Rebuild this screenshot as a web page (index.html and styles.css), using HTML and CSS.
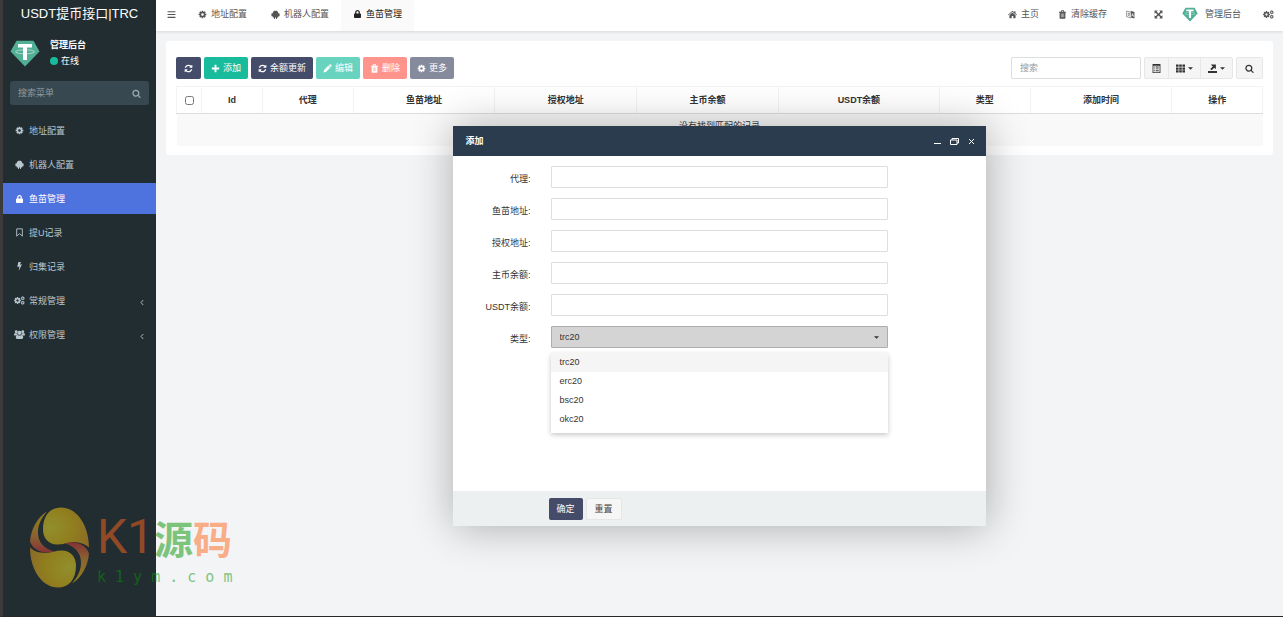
FILE: index.html
```html
<!DOCTYPE html>
<html lang="zh-CN">
<head>
<meta charset="utf-8">
<meta name="viewport" content="width=device-width, initial-scale=1">
<title>鱼苗管理</title>
<link rel="stylesheet" href="styles.css">
</head>
<body>
<svg class="sprite" aria-hidden="true">
  <symbol id="i-cog" viewBox="0 0 1792 1792"><path d="M1152 896q0-106-75-181t-181-75-181 75-75 181 75 181 181 75 181-75 75-181zm512-109v222q0 12-8 23t-20 13l-185 28q-19 54-39 91 35 50 107 138 10 12 10 25t-9 23q-27 37-99 108t-94 71q-12 0-26-9l-138-108q-44 23-91 38-16 136-29 186-7 28-36 28h-222q-14 0-24.5-8.5t-11.5-21.5l-28-184q-49-16-90-37l-141 107q-10 9-25 9-14 0-25-11-126-114-165-168-7-10-7-23 0-12 8-23 15-21 51-66.5t54-70.5q-27-50-41-99l-183-27q-13-2-21-12.5t-8-23.5v-222q0-12 8-23t19-13l186-28q14-46 39-92-40-57-107-138-10-12-10-24 0-10 9-23 26-36 98.5-107.5t94.5-71.5q13 0 26 10l138 107q44-23 91-38 16-136 29-186 7-28 36-28h222q14 0 24.5 8.5t11.5 21.5l28 184q49 16 90 37l142-107q9-9 24-9 13 0 25 10 129 119 165 170 7 8 7 22 0 12-8 23-15 21-51 66.5t-54 70.5q26 50 41 98l183 28q13 2 21 12.5t8 23.5z"/></symbol>
  <symbol id="i-cogs" viewBox="0 0 22 18"><use href="#i-cog" x="-1" y="1" width="16" height="16"/><use href="#i-cog" x="13" y="0" width="9" height="9"/><use href="#i-cog" x="13" y="9" width="9" height="9"/></symbol>
  <symbol id="i-refresh" viewBox="0 0 1792 1792"><path d="M1639 1056q0 5-1 7-64 268-268 434.500t-478 166.500q-146 0-282.500-55t-243.500-157l-129 129q-19 19-45 19t-45-19-19-45v-448q0-26 19-45t45-19h448q26 0 45 19t19 45-19 45l-137 137q71 66 161 102t187 36q134 0 250-65t186-179q11-17 53-117 8-23 30-23h192q13 0 22.500 9.500t9.500 22.500zm25-800v448q0 26-19 45t-45 19h-448q-26 0-45-19t-19-45 19-45l138-138q-148-137-349-137-134 0-250 65t-186 179q-11 17-53 117-8 23-30 23h-199q-13 0-22.500-9.500t-9.500-22.500v-7q65-268 270-434.500t480-166.500q146 0 284 55.500t245 156.500l130-129q19-19 45-19t45 19 19 45z"/></symbol>
  <symbol id="i-search" viewBox="0 0 1792 1792"><path d="M1216 832q0-185-131.500-316.500t-316.500-131.500-316.500 131.500-131.500 316.500 131.500 316.500 316.500 131.500 316.500-131.500 131.500-316.500zm512 832q0 52-38 90t-90 38q-54 0-90-38l-343-342q-179 124-399 124-143 0-273.500-55.500t-225-150-150-225-55.500-273.500 55.500-273.500 150-225 225-150 273.500-55.500 273.500 55.500 225 150 150 225 55.500 273.500q0 220-124 399l343 343q37 37 37 90z"/></symbol>
  <symbol id="i-lock" viewBox="-32 0 512 512"><path d="M400 224h-24v-72C376 68.200 307.800 0 224 0S72 68.200 72 152v72H48c-26.500 0-48 21.500-48 48v192c0 26.500 21.500 48 48 48h352c26.500 0 48-21.500 48-48V272c0-26.500-21.500-48-48-48zm-104 0H152v-72c0-39.700 32.300-72 72-72s72 32.300 72 72v72z"/></symbol>
  <symbol id="i-android" viewBox="0 0 16 16"><path d="M3 6C3 3.500 4.500 2.300 5.800 1.800L5.200.6l.5-.3.7 1.300a5 5 0 0 1 3.200 0L10.300.3l.5.3-.6 1.200C11.500 2.300 13 3.500 13 6v6.300c0 .6-.4 1-1 1h-1.300v1.800a.9.900 0 0 1-1.800 0v-1.800H7.100v1.800a.9.900 0 0 1-1.800 0v-1.800H4c-.6 0-1-.4-1-1z"/><rect x=".7" y="5.700" width="3" height="5.600" rx="1.200"/><rect x="12.300" y="5.700" width="3" height="5.600" rx="1.200"/></symbol>
  <symbol id="i-bookmark" viewBox="0 0 16 16"><path d="M3 1.500h10v13l-5-4.600-5 4.600z" fill="none" stroke="currentColor" stroke-width="1.600" stroke-linejoin="round"/></symbol>
  <symbol id="i-bolt" viewBox="0 0 16 16"><path d="M6 0h4.500L8.800 4.700 12.500 4 6.500 16l1.300-8L4 8.800z"/></symbol>
  <symbol id="i-users" viewBox="0 0 20 16"><circle cx="4" cy="3" r="2.600"/><circle cx="16" cy="3" r="2.600"/><circle cx="10" cy="5" r="3.800"/><path d="M0 9.500C0 6.500.8 5.300 2 5.300c1 .7 2.500.8 3.600.5.200 1.200.5 2 1.300 2.700-1.400 0-2.400.5-3 1.300H1.200C.5 9.800 0 9.500 0 9.500zM20 9.500c0-3-.8-4.200-2-4.200-1 .7-2.500.8-3.600.5-.2 1.200-.5 2-1.300 2.700 1.400 0 2.400.5 3 1.300h2.700c.7 0 1.200-.3 1.200-.3zM3.300 13.500c0-3 .9-4.800 3-4.800 2 1.700 5.400 1.700 7.400 0 2.100 0 3 1.800 3 4.800 0 1.500-1 2.500-2.500 2.500H5.800c-1.500 0-2.500-1-2.500-2.500z"/></symbol>
  <symbol id="i-bars" viewBox="0 0 16 16"><path d="M1 2h14v2H1zM1 7h14v2H1zM1 12h14v2H1z"/></symbol>
  <symbol id="i-home" viewBox="0 0 16 16"><path d="M8 1.500l3 2.600V2.300h2.200v3.600L16 8.300l-.9 1L8 3.300.9 9.300l-.9-1z"/><path d="M8 4.600l5.500 4.600v4.600c0 .4-.3.700-.7.700H9.400v-4H6.600v4H3.200c-.4 0-.7-.3-.7-.7V9.200z"/></symbol>
  <symbol id="i-trash" viewBox="0 0 16 16"><path fill-rule="evenodd" d="M1.500 3h3.300l.8-1.900C5.800.6 6.200.3 6.700.3h2.600c.5 0 .9.300 1.100.8l.8 1.900h3.300v1.500h-1.300v9.300c0 1.100-.7 1.900-1.600 1.900H4.400c-.9 0-1.600-.8-1.600-1.900V4.500H1.500zm5-.1h3l-.6-1.300H7.100zM5.200 6v7H6V6zm2.400 0v7h.8V6zm2.400 0v7h.8V6z"/></symbol>
  <symbol id="i-lang" viewBox="0 0 16 16"><path d="M1 2l8 2v10l-8-2z" fill="none" stroke="currentColor" stroke-width="1"/><path d="M8 1.500l7 2V15l-6-1.800V4z"/><path d="M3 5.800l4 .8M5 5v1.300M6.500 6.800C6 9 5 10 3 10.500M3.500 7.500c.7 1.500 1.500 2.300 3 3" fill="none" stroke="currentColor"/><path d="M10.200 11.200l1.600-5 1.900 6M10.900 9.500l2 .6" fill="none" stroke="#fff" stroke-width="1.100"/></symbol>
  <symbol id="i-expand" viewBox="0 0 16 16"><path d="M1 1h5.500L4.800 2.900 8 6.100l3.200-3.200L9.500 1H15v5.500l-1.900-1.700L9.900 8l3.200 3.200L15 9.500V15H9.500l1.700-1.900L8 9.900l-3.200 3.200L6.500 15H1V9.500l1.900 1.700L6.100 8 2.900 4.800 1 6.500z"/></symbol>
  <symbol id="i-plus" viewBox="0 0 16 16"><path d="M6.300 1.500h3.400v4.800h4.800v3.400H9.700v4.800H6.300V9.700H1.500V6.300h4.800z"/></symbol>
  <symbol id="i-pencil" viewBox="0 0 16 16"><path d="M1 15l.9-4.300 7.900-7.900 3.400 3.400-7.900 7.900zM10.700 1.900l1-1c.6-.6 1.300-.6 1.900 0l1.500 1.500c.6.600.6 1.300 0 1.900l-1 1z"/></symbol>
  <symbol id="i-list" viewBox="0 0 16 16"><path fill-rule="evenodd" d="M1 0h14v16H1zm1.500 3v11.500h11V3zM4 4.500h1.500V6H4zm2.700 0H12V6H6.700zM4 8h1.500v1.500H4zm2.700 0H12v1.500H6.700zM4 11.300h1.500v1.500H4zm2.700 0H12v1.500H6.700z"/></symbol>
  <symbol id="i-grid" viewBox="0 0 16 16"><path d="M0 1h4.600v4H0zM5.700 1h4.600v4H5.700zM11.400 1H16v4h-4.600zM0 6h4.600v4H0zM5.700 6h4.600v4H5.700zM11.400 6H16v4h-4.600zM0 11h4.600v4H0zM5.700 11h4.600v4H5.700zM11.400 11H16v4h-4.600z"/></symbol>
  <symbol id="i-export" viewBox="0 0 16 16"><path d="M0 12.500h16V16H0zM5 1h9v8.500l-2.800-2.800L6.500 11.300 4 8.800l4.500-4.500z"/></symbol>
  <symbol id="i-caret" viewBox="0 0 8 4"><path d="M0 0h8L4 4z"/></symbol>
  <symbol id="i-left" viewBox="0 0 8 12"><path d="M6.500 1L2 6l4.500 5" fill="none" stroke="currentColor" stroke-width="1.800"/></symbol>
  <symbol id="i-min" viewBox="0 0 9 9"><path d="M1 6h7v1H1z"/></symbol>
  <symbol id="i-max" viewBox="0 0 9 9"><path d="M.5 3h6.500v4.500H.5zM2 3V1.500h6.500V6H7" fill="none" stroke="currentColor"/></symbol>
  <symbol id="i-close" viewBox="0 0 9 9"><path d="M2 2l5 5M7 2L2 7" fill="none" stroke="currentColor"/></symbol>
  <symbol id="i-tether" viewBox="0 0 30 27"><path d="M6.500.8h17L29.500 11.500 15 26.500.5 11.500z" fill="#50af95"/><path d="M8 4h14v3.600h-5V20h-4V7.600H8z" fill="#fff"/><ellipse cx="15" cy="11.800" rx="9.500" ry="2" fill="none" stroke="#fff" stroke-opacity=".75" stroke-width=".7"/></symbol>
</svg>

<div class="app">
  <aside class="sidebar">
    <a class="brand" href="#">USDT提币接口|TRC</a>
    <div class="user">
      <svg class="avatar"><use href="#i-tether"/></svg>
      <div class="user-info">
        <strong>管理后台</strong>
        <span class="status"><i class="dot"></i>在线</span>
      </div>
    </div>
    <form class="side-search">
      <input type="text" placeholder="搜索菜单" aria-label="搜索菜单">
      <button type="button" aria-label="搜索"><svg class="icon"><use href="#i-search"/></svg></button>
    </form>
    <nav class="menu">
      <a href="#"><svg class="icon"><use href="#i-cog"/></svg>地址配置</a>
      <a href="#"><svg class="icon"><use href="#i-android"/></svg>机器人配置</a>
      <a href="#" class="active"><svg class="icon small"><use href="#i-lock"/></svg>鱼苗管理</a>
      <a href="#"><svg class="icon"><use href="#i-bookmark"/></svg>提U记录</a>
      <a href="#"><svg class="icon"><use href="#i-bolt"/></svg>归集记录</a>
      <a href="#"><svg class="icon wide"><use href="#i-cogs"/></svg>常规管理<svg class="chevron"><use href="#i-left"/></svg></a>
      <a href="#"><svg class="icon wide"><use href="#i-users"/></svg>权限管理<svg class="chevron"><use href="#i-left"/></svg></a>
    </nav>
  </aside>

  <div class="content">
    <header class="topbar">
      <button class="toggle" type="button" aria-label="菜单"><svg class="icon"><use href="#i-bars"/></svg></button>
      <nav class="tabs">
        <a href="#"><svg class="icon"><use href="#i-cog"/></svg>地址配置</a>
        <a href="#"><svg class="icon"><use href="#i-android"/></svg>机器人配置</a>
        <a href="#" class="active"><svg class="icon small"><use href="#i-lock"/></svg>鱼苗管理</a>
      </nav>
      <nav class="tools">
        <a href="#"><svg class="icon"><use href="#i-home"/></svg>主页</a>
        <a href="#"><svg class="icon"><use href="#i-trash"/></svg>清除缓存</a>
        <a href="#" aria-label="语言"><svg class="icon"><use href="#i-lang"/></svg></a>
        <a href="#" aria-label="全屏"><svg class="icon"><use href="#i-expand"/></svg></a>
        <a href="#" class="account"><svg class="avatar-small"><use href="#i-tether"/></svg>管理后台</a>
        <a href="#" aria-label="设置"><svg class="icon wide"><use href="#i-cogs"/></svg></a>
      </nav>
    </header>

    <main class="main">
      <section class="panel">
        <div class="toolbar">
          <div class="actions">
            <button type="button" class="btn square navy" aria-label="刷新"><svg class="icon"><use href="#i-refresh"/></svg></button>
            <button type="button" class="btn green"><svg class="icon"><use href="#i-plus"/></svg>添加</button>
            <button type="button" class="btn navy"><svg class="icon"><use href="#i-refresh"/></svg>余额更新</button>
            <button type="button" class="btn green" disabled><svg class="icon"><use href="#i-pencil"/></svg>编辑</button>
            <button type="button" class="btn red" disabled><svg class="icon"><use href="#i-trash"/></svg>删除</button>
            <button type="button" class="btn navy" disabled><svg class="icon"><use href="#i-cog"/></svg>更多</button>
          </div>
          <div class="filters">
            <input class="field search-field" type="text" placeholder="搜索" aria-label="搜索">
            <div class="group">
              <button type="button" aria-label="切换"><svg class="icon"><use href="#i-list"/></svg></button>
              <button type="button" aria-label="列"><svg class="icon"><use href="#i-grid"/></svg><svg class="caret"><use href="#i-caret"/></svg></button>
              <button type="button" aria-label="导出"><svg class="icon"><use href="#i-export"/></svg><svg class="caret"><use href="#i-caret"/></svg></button>
            </div>
            <div class="group"><button type="button" aria-label="搜索"><svg class="icon"><use href="#i-search"/></svg></button></div>
          </div>
        </div>
        <table class="grid">
          <colgroup><col class="c-check"><col class="c-id"><col class="c-short"><col class="c-long"><col class="c-long"><col class="c-long"><col class="c-usdt"><col class="c-short"><col class="c-long"><col class="c-short"></colgroup>
          <thead><tr><th><input type="checkbox" aria-label="全选"></th><th>Id</th><th>代理</th><th>鱼苗地址</th><th>授权地址</th><th>主币余额</th><th>USDT余额</th><th>类型</th><th>添加时间</th><th>操作</th></tr></thead>
          <tbody><tr><td colspan="10">没有找到匹配的记录</td></tr></tbody>
        </table>
      </section>

      <div class="dialog" role="dialog" aria-labelledby="dialog-title">
        <div class="dialog-head">
          <strong id="dialog-title">添加</strong>
          <div class="window-buttons">
            <button type="button" aria-label="最小化"><svg><use href="#i-min"/></svg></button>
            <button type="button" aria-label="最大化"><svg><use href="#i-max"/></svg></button>
            <button type="button" aria-label="关闭"><svg><use href="#i-close"/></svg></button>
          </div>
        </div>
        <form class="dialog-body">
          <label for="agent">代理:</label><input class="field" id="agent" type="text">
          <label for="fish">鱼苗地址:</label><input class="field" id="fish" type="text">
          <label for="auth">授权地址:</label><input class="field" id="auth" type="text">
          <label for="main-balance">主币余额:</label><input class="field" id="main-balance" type="text">
          <label for="usdt">USDT余额:</label><input class="field" id="usdt" type="text">
          <label for="type">类型:</label>
          <div class="picker">
            <select id="type"><option>trc20</option><option>erc20</option><option>bsc20</option><option>okc20</option></select>
            <svg class="caret"><use href="#i-caret"/></svg>
            <ul class="options" role="listbox" aria-label="类型">
              <li role="option" aria-selected="true">trc20</li>
              <li role="option">erc20</li>
              <li role="option">bsc20</li>
              <li role="option">okc20</li>
            </ul>
          </div>
        </form>
        <div class="dialog-foot">
          <button type="button" class="btn square navy">确定</button>
          <button type="button" class="btn square plain">重置</button>
        </div>
      </div>
    </main>
  </div>
</div>

<div class="watermark">
  <svg class="ball" viewBox="0 0 60 80" aria-hidden="true">
    <defs>
      <radialGradient id="gold-a" cx=".15" cy=".5" r="1"><stop offset="0" stop-color="#fff02a"/><stop offset=".5" stop-color="#ffd00c"/><stop offset="1" stop-color="#f0a020"/></radialGradient>
      <radialGradient id="gold-b" cx=".85" cy=".5" r="1"><stop offset="0" stop-color="#fff02a"/><stop offset=".5" stop-color="#ffd00c"/><stop offset="1" stop-color="#f0a020"/></radialGradient>
      <linearGradient id="edge-a" x1="0" y1="0" x2="0" y2="1"><stop offset="0" stop-color="#ffd000"/><stop offset=".6" stop-color="#f09a30"/><stop offset="1" stop-color="#e83838"/></linearGradient>
      <linearGradient id="edge-b" x1="0" y1="1" x2="0" y2="0"><stop offset="0" stop-color="#ffd000"/><stop offset=".6" stop-color="#f09a30"/><stop offset="1" stop-color="#e83838"/></linearGradient>
    </defs>
    <path d="M13 22C13 8 20 0 31 0c16 0 28 18 28 40-5-5-13-6-19-5-6 1-8 2-13 2-9 0-14-7-14-15z" fill="url(#gold-a)"/>
    <path d="M46 58c0 14-7 22-18 22C12 80 0 62 0 40c5 5 13 6 19 5 6-1 8-2 13-2 9 0 14 7 14 15z" fill="url(#gold-b)"/>
    <path d="M17 4C7 10 1 22 0 34c3 8 11 13 24 10C14 41 8 35 8 25c0-6 2-13 9-21z" fill="url(#edge-a)"/>
    <path d="M42 76c10-6 16-18 17-30-3-8-11-13-24-10 10 3 16 9 16 19 0 6-2 13-9 21z" fill="url(#edge-b)"/>
  </svg>
  <div class="mark-text">
    <div class="mark-name"><span class="mark-k1">K1</span><span class="mark-green">源</span><span>码</span></div>
    <div class="mark-site">k 1 y m . c o m</div>
  </div>
</div>
</body>
</html>
```
FILE: styles.css
```css
* { box-sizing: border-box; }

body {
  margin: 0;
  position: relative;
  font: 9px/14px "Liberation Sans", "Noto Sans CJK SC", sans-serif;
  color: #333;
  background: #f2f4f6;
}

a { color: inherit; text-decoration: none; }
button, input, select { font: inherit; color: inherit; }
button { cursor: pointer; }
svg { display: block; fill: currentColor; flex: none; }

.sprite { position: absolute; width: 0; height: 0; }
.icon { width: 9px; height: 9px; }
.icon.wide { width: 11px; height: 9px; }
.icon.small { height: 8px; }
.caret { width: 5px; height: 3px; }

.app {
  display: flex;
  min-height: 100vh;
  border-left: 3px solid #3c3a3b;
  border-bottom: 1px solid #2a2527;
}

/* Sidebar */
.sidebar { width: 153px; flex: none; background: #222d32; color: #b8c7ce; }
.brand {
  display: block;
  height: 30px;
  font-size: 13px;
  line-height: 28px;
  text-align: center;
  color: #fff;
}
.user { display: flex; align-items: center; gap: 10px; padding: 8px 7px 0; color: #fff; }
.avatar { width: 30px; height: 27px; }
.user-info { display: flex; flex-direction: column; gap: 2px; }
.status { display: flex; align-items: center; gap: 3px; }
.dot { width: 8px; height: 8px; border-radius: 50%; background: #18bc9c; }
.side-search {
  display: flex;
  align-items: center;
  height: 24px;
  margin: 13px 7px 10px;
  padding: 0 8px;
  border-radius: 3px;
  background: #374850;
}
.side-search input { flex: 1; min-width: 0; padding: 0; border: 0; background: none; outline: 0; }
.side-search input::placeholder { color: #8d9ba1; }
.side-search button { padding: 0; border: 0; background: none; color: #9eacb2; }

.menu { display: flex; flex-direction: column; gap: 3px; }
.menu a { display: flex; align-items: center; gap: 5px; height: 31px; padding: 0 12px; }
.menu .icon.wide { margin: 0 -1px; }
.menu .active { background: #4e73df; color: #fff; }
.chevron { width: 4px; height: 7px; margin-left: auto; margin-top: 4px; }

/* Top bar */
.content { flex: 1; min-width: 0; display: flex; flex-direction: column; }
.topbar {
  display: flex;
  height: 31px;
  background: #fff;
  color: #555;
  box-shadow: 0 1px 3px rgba(0, 21, 41, .12);
}
.topbar a { display: flex; align-items: center; gap: 4px; padding-bottom: 3px; }
.toggle { width: 30px; padding: 0 11px 3px; border: 0; background: none; }
.tabs { display: flex; }
.tabs a { padding-left: 12px; padding-right: 12px; }
.tabs .active { background: #fafafa; color: #222; }
.tools { display: flex; gap: 19px; margin-left: auto; padding-right: 9px; }
.tools .account { gap: 7px; padding-right: 3px; }
.avatar-small { width: 16px; height: 15px; }

/* Data panel */
.main { flex: 1; position: relative; padding: 10px; }
.panel { padding: 16px 10px 9px; border-radius: 3px; background: #fff; }
.toolbar { display: flex; justify-content: space-between; margin-bottom: 7px; }
.actions { display: flex; gap: 3px; }
.filters { display: flex; gap: 3px; }

.btn {
  display: flex;
  align-items: center;
  gap: 3px;
  height: 22px;
  padding: 0 7px;
  border: 0;
  border-radius: 2px;
  color: #fff;
}
.btn.square { padding: 0 8px; }
.btn:disabled { opacity: .65; }
.navy { background: #444c69; }
.green { background: #18bc9c; }
.red { background: #ff5c50; }
.btn.plain { border: 1px solid #e6e6e6; background: #f6f6f6; color: #444; }

.field {
  width: 100%;
  height: 22px;
  padding: 0 8px;
  border: 1px solid #dcdfe2;
  border-radius: 1px;
  background: #fff;
  outline: 0;
}
.field::placeholder { color: #999; }
.search-field { width: 130px; }
.group { display: flex; border: 1px solid #e7e7e7; border-radius: 2px; background: #f5f5f5; }
.group button { display: flex; align-items: center; gap: 3px; padding: 0 7px; border: 0; background: none; }
.group button + button { border-left: 1px solid #e7e7e7; }
.group button:only-child { padding: 0 8px; }

.grid { width: 100%; table-layout: fixed; border-collapse: collapse; }
.grid th { height: 27px; padding: 0; border: 1px solid #f3f3f3; border-bottom-color: #ddd; text-align: center; }
.grid th input { display: block; width: 9px; height: 9px; margin: 0 auto; }
.grid td { height: 32px; padding: 0 0 8px; background: #f9f9f9; text-align: center; }
.c-check { width: 25px; }
.c-id { width: 61px; }
.c-short { width: 8.35%; }
.c-long { width: 13.05%; }

/* Dialog */
.dialog {
  position: absolute;
  top: 95px;
  left: 50%;
  width: 533px;
  margin-left: -267px;
  background: #fff;
  box-shadow: 1px 1px 40px rgba(0, 0, 0, .3);
}
.dialog-head {
  display: flex;
  align-items: center;
  justify-content: space-between;
  height: 30px;
  padding: 0 10px 0 13px;
  background: #2c3c4f;
  color: #fff;
}
.window-buttons { display: flex; gap: 8px; }
.window-buttons button { padding: 0; border: 0; background: none; }
.window-buttons svg { width: 9px; height: 9px; }
.dialog-body {
  display: grid;
  grid-template-columns: 78px 1fr;
  gap: 10px 20px;
  align-items: center;
  align-content: start;
  min-height: 335px;
  padding: 10px 98px 10px 0;
}
.dialog-body label { padding-top: 3px; text-align: right; }
.picker { position: relative; }
.picker select {
  display: block;
  width: 100%;
  height: 22px;
  padding: 0 8px;
  appearance: none;
  border: 1px solid #adadad;
  border-radius: 1px;
  background: #d4d4d4;
  outline: 0;
}
.picker .caret { position: absolute; top: 10px; right: 9px; }
.options {
  position: absolute;
  top: 100%;
  left: 0;
  right: 0;
  margin: 5px 0 0;
  padding: 0 0 4px;
  list-style: none;
  background: #fff;
  box-shadow: 0 2px 5px rgba(0, 0, 0, .22);
}
.options li { padding: 0 9px; line-height: 19px; }
.options [aria-selected="true"] { background: #f5f5f5; }
.dialog-foot { display: flex; gap: 3px; padding: 7px 96px 6px; background: #ecf0f1; }

/* Watermark */
.watermark {
  position: absolute;
  left: 30px;
  bottom: 29px;
  display: flex;
  gap: 7px;
  opacity: .5;
  pointer-events: none;
}
.ball { width: 60px; height: 81px; }
.mark-name { display: flex; align-items: center; height: 60px; font: bold 39px/60px "Noto Sans CJK SC", sans-serif; color: #ff681a; }
.mark-k1 { font: 48px/60px Roboto, sans-serif; }
.mark-green, .mark-site { color: #089604; }
.mark-site { font: 15px/20px "DejaVu Sans Mono", monospace; white-space: nowrap; }
```
